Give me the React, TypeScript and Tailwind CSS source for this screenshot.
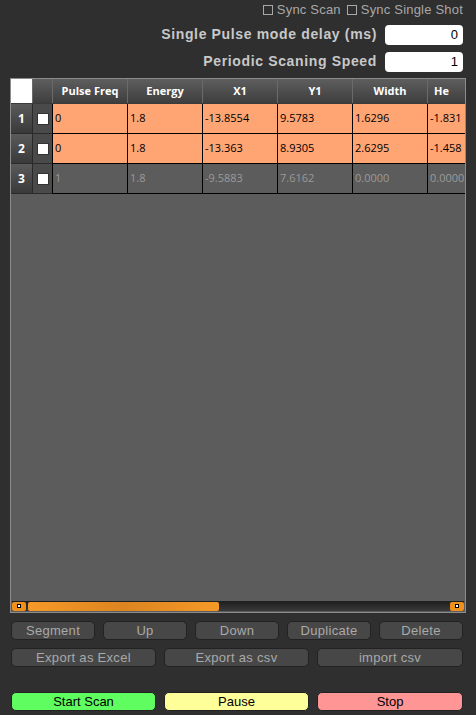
import React from "react";

type Row = { n: number; cells: string[]; active: boolean };

const headers = ["Pulse Freq", "Energy", "X1", "Y1", "Width"];

const rows: Row[] = [
   { n: 1, cells: ["0", "1.8", "-13.8554", "9.5783", "1.6296", "-1.831"], active: true },
   { n: 2, cells: ["0", "1.8", "-13.363", "8.9305", "2.6295", "-1.458"], active: true },
   { n: 3, cells: ["1", "1.8", "-9.5883", "7.6162", "0.0000", "0.0000"], active: false },
];

const Btn = ({ label, w }: { label: string; w: string }) => (
   <button
      className={`${w} h-[19px] rounded-[5px] border border-[#222] bg-[#474747] text-[#a9a9a9] text-[13px] leading-none tracking-[0.3px]`}
   >
      {label}
   </button>
);

const ScrollBtn = () => (
   <div className="w-[14px] h-[9px] rounded-[2px] bg-[#f0901c] flex items-center justify-center">
      <div className="w-[4px] h-[4px] border border-black bg-white" />
   </div>
);

const App = () => {
   return (
      <div
         className="w-[476px] h-[715px] bg-[#2f2f2f] flex flex-col overflow-hidden"
         style={{ fontFamily: '"Liberation Sans", Arial, sans-serif' }}
      >
         {/* top settings */}
         <div className="flex flex-col items-end pr-[13px] pt-[3px]">
            <div className="flex items-center gap-[6px] text-[13px] text-[#a8a8a8] leading-none tracking-[0.2px]">
               <div className="flex items-center gap-[4px]">
                  <div className="w-[10px] h-[10px] border border-[#a8a8a8]" />
                  <span>Sync Scan</span>
               </div>
               <div className="flex items-center gap-[4px]">
                  <div className="w-[10px] h-[10px] border border-[#a8a8a8]" />
                  <span>Sync Single Shot</span>
               </div>
            </div>
            <div className="flex items-center gap-[8px] mt-[8px]">
               <span className="text-[14px] font-bold text-[#c8c8c8] tracking-[0.65px]">
                  Single Pulse mode delay (ms)
               </span>
               <div className="w-[78px] h-[20px] rounded-[4px] bg-white text-black text-[13px] flex items-center justify-end pr-[5px]">
                  0
               </div>
            </div>
            <div className="flex items-center gap-[8px] mt-[6px]">
               <span className="text-[14px] font-bold text-[#c8c8c8] tracking-[0.65px]">
                  Periodic Scaning Speed
               </span>
               <div className="w-[78px] h-[20px] rounded-[4px] bg-white text-black text-[13px] flex items-center justify-end pr-[5px]">
                  1
               </div>
            </div>
         </div>

         {/* table */}
         <div className="ml-[10px] mt-[6px] w-[456px] h-[535px] border border-[#8c8c8c] bg-[#5c5c5c] flex flex-col">
            <div
               className="flex-1 overflow-hidden text-[11px]"
               style={{ fontFamily: '"Open Sans", "Noto Sans", sans-serif' }}
            >
               <div className="flex h-[25px] w-[600px] border-b border-[#3a3a3a]">
                  <div className="w-[21px] bg-white" />
                  <div className="w-[20px] bg-gradient-to-b from-[#5e5e5e] to-[#3e3e3e] border-l border-[#6a6a6a]" />
                  {headers.map((h) => (
                     <div
                        key={h}
                        className="w-[75px] shrink-0 bg-gradient-to-b from-[#5e5e5e] to-[#3e3e3e] border-l border-[#6a6a6a] flex items-center justify-center font-bold text-white"
                     >
                        {h}
                     </div>
                  ))}
                  <div className="w-[75px] shrink-0 bg-gradient-to-b from-[#5e5e5e] to-[#3e3e3e] border-l border-[#6a6a6a] flex items-center pl-[6px] font-bold text-white">
                     He
                  </div>
               </div>
               {rows.map((r) => (
                  <div key={r.n} className="flex h-[30px] w-[600px]">
                     <div className="w-[21px] shrink-0 bg-gradient-to-b from-[#5a5a5a] to-[#3a3a3a] border-b border-[#2a2a2a] flex items-center justify-center font-bold text-white text-[12px]">
                        {r.n}
                     </div>
                     <div className="w-[20px] shrink-0 bg-[#4a4a4a] border-b border-l border-[#2a2a2a] flex items-center justify-center">
                        <div className="w-[12px] h-[12px] bg-white border border-[#333]" />
                     </div>
                     {r.cells.map((c, i) => (
                        <div
                           key={i}
                           className={`w-[75px] shrink-0 border-l border-b border-black flex items-center pl-[2px] ${
                              r.active ? "bg-[#ffa574] text-black" : "bg-[#5c5c5c] text-[#9a9a9a]"
                           }`}
                        >
                           {c}
                        </div>
                     ))}
                  </div>
               ))}
            </div>
            {/* scrollbar */}
            <div className="h-[10px] mb-[1px] mx-[1px] bg-gradient-to-b from-[#1e1e1e] to-[#3a3a3a] flex items-center gap-[2px]">
               <ScrollBtn />
               <div className="w-[191px] h-[9px] rounded-[2px] bg-gradient-to-r from-[#f59a28] via-[#dc8420] to-[#f59a28]" />
               <div className="flex-1" />
               <ScrollBtn />
            </div>
         </div>

         {/* buttons */}
         <div className="ml-[11px] mt-[8px] flex gap-[8px]">
            <Btn label="Segment" w="w-[84px]" />
            <Btn label="Up" w="w-[84px]" />
            <Btn label="Down" w="w-[84px]" />
            <Btn label="Duplicate" w="w-[84px]" />
            <Btn label="Delete" w="w-[84px]" />
         </div>
         <div className="ml-[11px] mt-[8px] flex gap-[8px]">
            <Btn label="Export as Excel" w="w-[145px]" />
            <Btn label="Export as csv" w="w-[145px]" />
            <Btn label="import csv" w="w-[146px]" />
         </div>
         <div className="ml-[11px] mt-[25px] flex gap-[8px] text-[13px] text-black">
            <button className="w-[145px] h-[19px] rounded-[5px] border border-[#222] bg-[#5ffd5f] leading-none">
               Start Scan
            </button>
            <button className="w-[145px] h-[19px] rounded-[5px] border border-[#222] bg-[#ffff99] leading-none">
               Pause
            </button>
            <button className="w-[146px] h-[19px] rounded-[5px] border border-[#222] bg-[#ff9595] leading-none">
               Stop
            </button>
         </div>
      </div>
   );
};

export default App;
